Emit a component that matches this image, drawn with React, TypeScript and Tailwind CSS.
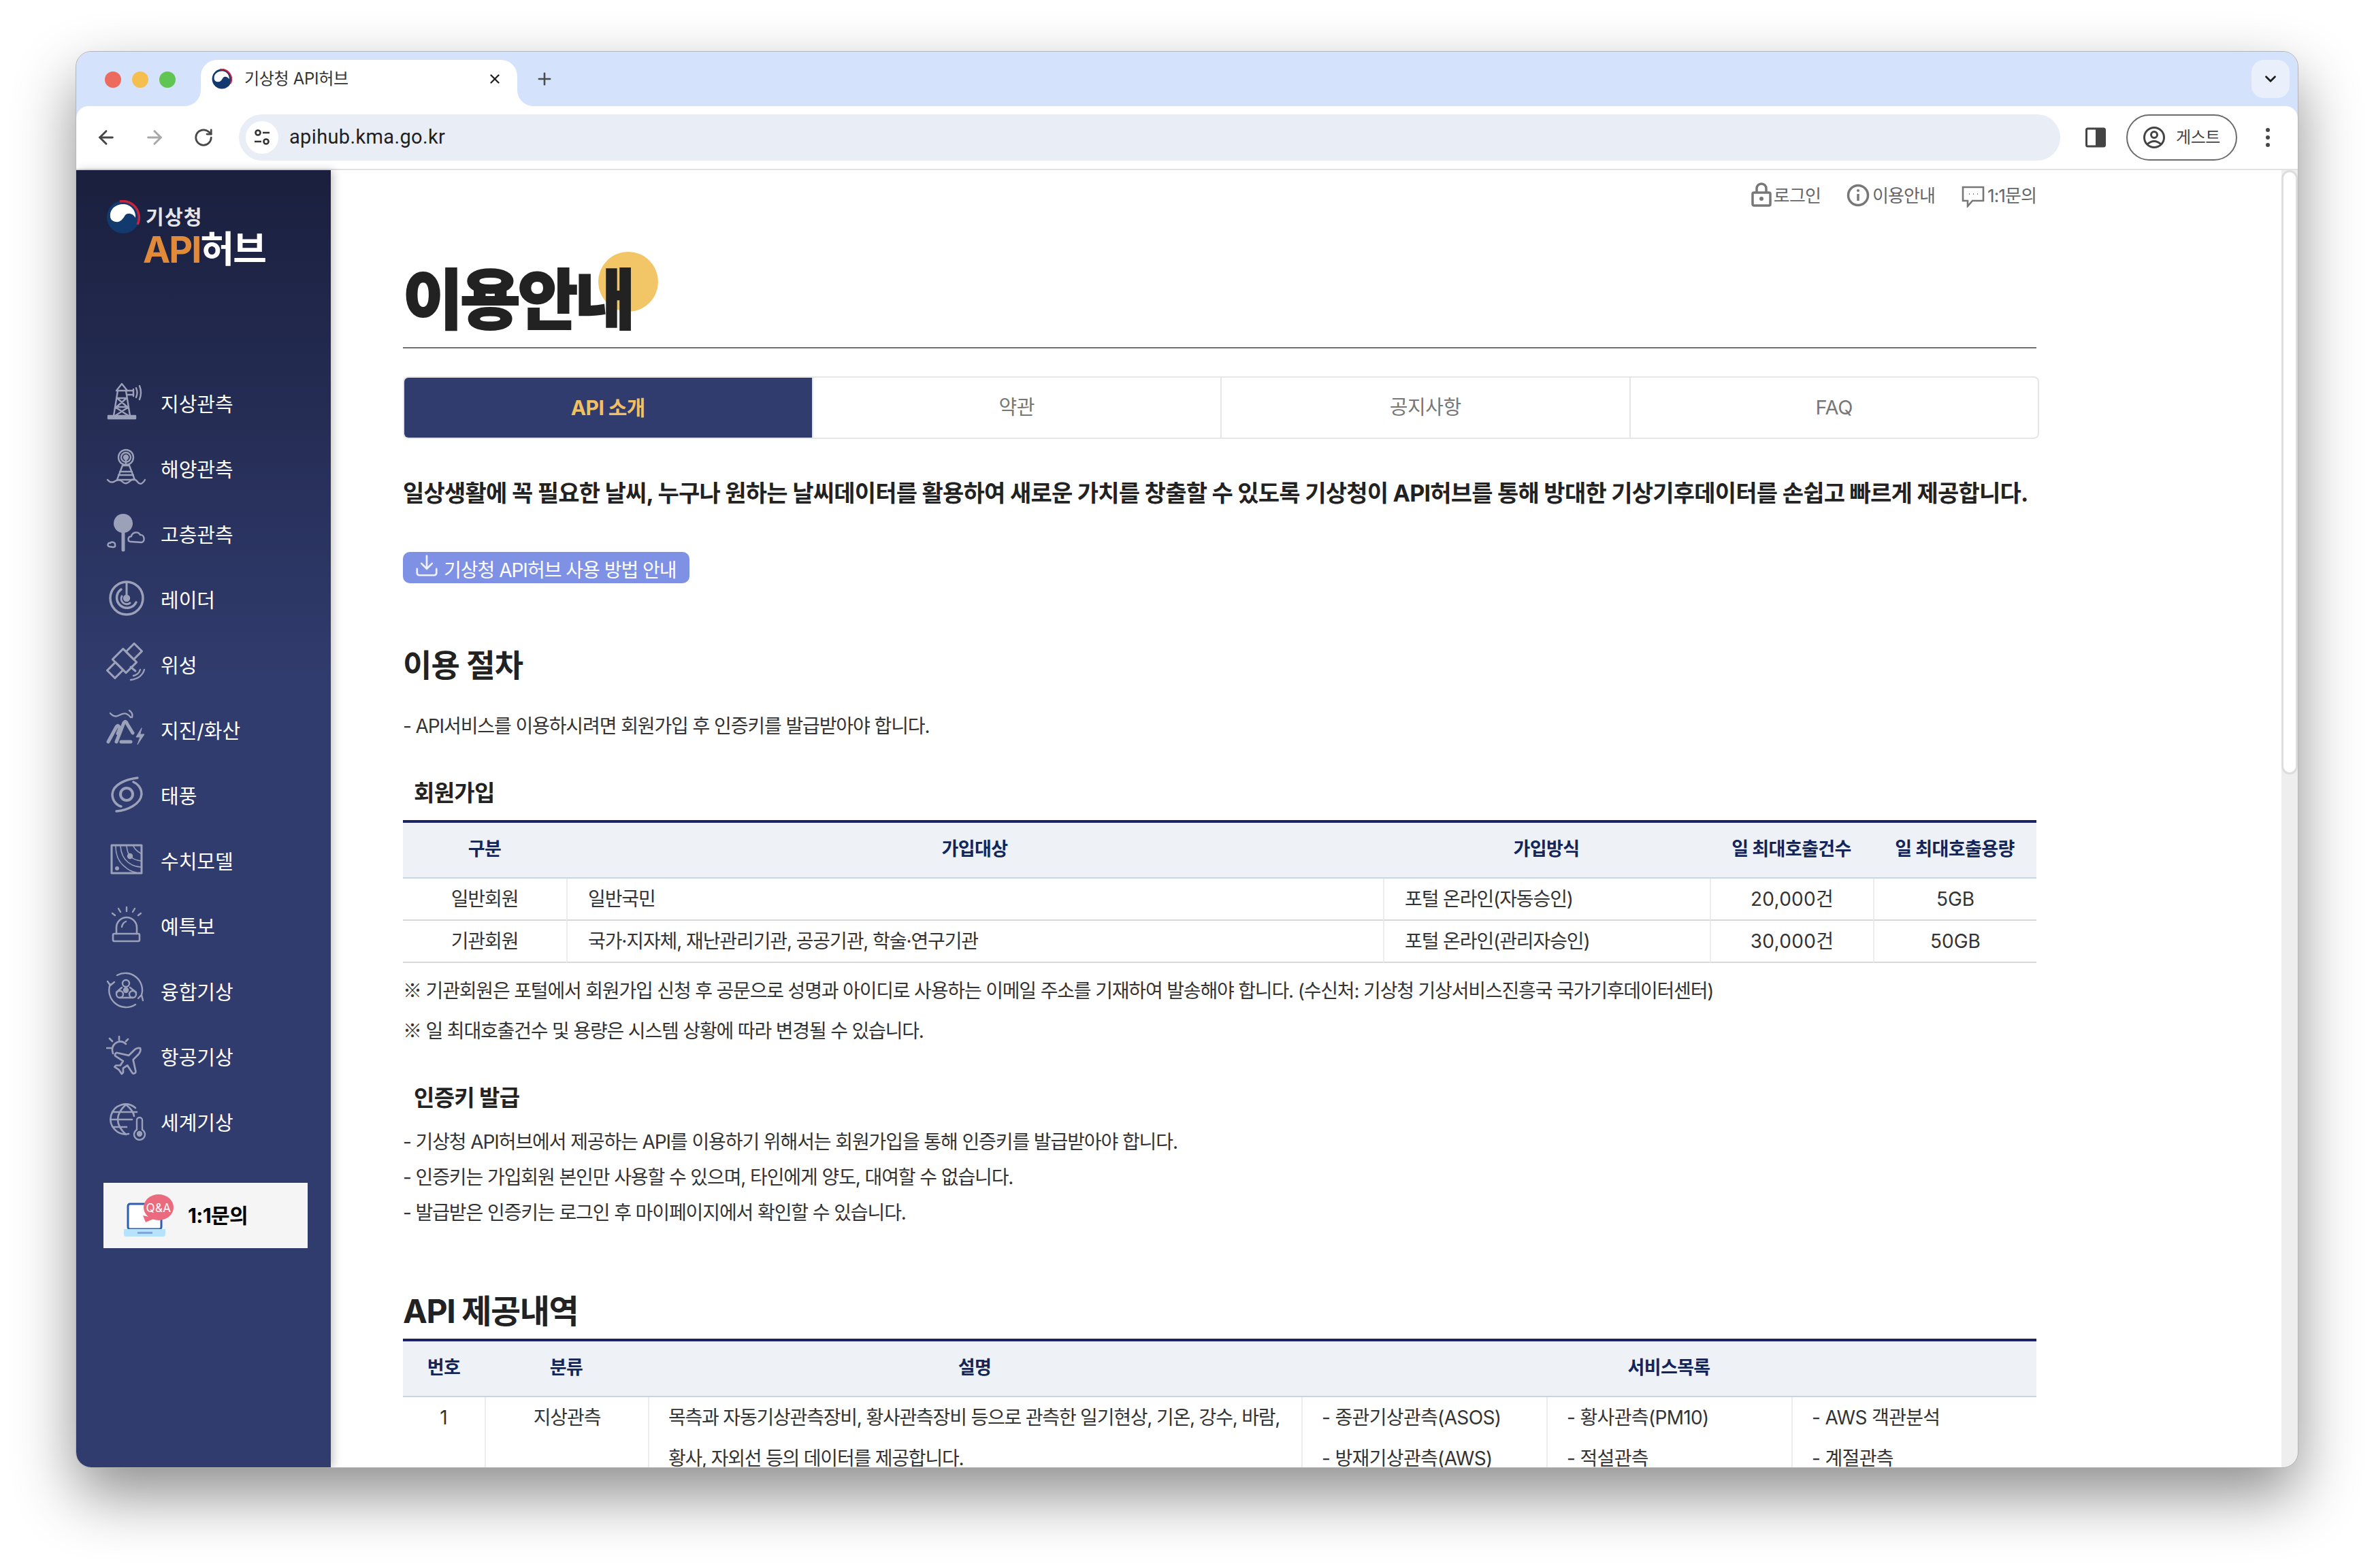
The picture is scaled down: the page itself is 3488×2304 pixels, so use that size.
import React from 'react';
import { ArrowLeft, ArrowRight, RotateCw, Plus, X, ChevronDown, Download } from 'lucide-react';

const Emblem = ({ size }: { size: number }) => (
  <svg width={size} height={size} viewBox="0 0 50 50" className="shrink-0">
    <circle cx="25" cy="25" r="24" fill="#123a6e" />
    <path d="M20 2 A24 24 0 0 1 46 36" fill="none" stroke="#c9233d" strokeWidth="3.5" />
    <path d="M6 24 C5 12 16 5 27 6 C37 7 44 16 43 26 C39 19 32 18 28 22 C24 29 20 33 14 32 C9 31 6 28 6 24Z" fill="#fff" />
  </svg>
);

const Ic = ({ children }: { children: React.ReactNode }) => (
  <svg width="60" height="60" viewBox="0 0 60 60" fill="none" stroke="currentColor" strokeWidth="2.4" strokeLinecap="round" strokeLinejoin="round" className="shrink-0 mb-[10px] text-[#9ca1ba]">
    {children}
  </svg>
);

const navItems: { label: string; icon: React.ReactNode }[] = [
  {
    label: '지상관측',
    icon: (
      <Ic>
        <rect x="3" y="51" width="40" height="4" fill="currentColor" />
        <path d="M11 51 L17 14 M35 51 L29 14 M15 14 H31 L23 4 Z M15 25 H31 M13 38 H33 M16 25 L31 38 M30 25 L15 38 M13 38 L33 51 M33 38 L13 51" />
        <path d="M31 14 H40 M31 20 H40 M40 12 V22" />
        <path d="M44 10 Q47 17 44 24 M49 7 Q53 17 49 27" />
      </Ic>
    ),
  },
  {
    label: '해양관측',
    icon: (
      <Ic>
        <circle cx="29" cy="16" r="11" />
        <circle cx="29" cy="16" r="7" />
        <circle cx="29" cy="16" r="3" fill="currentColor" />
        <path d="M29 18 V28 M24 28 H34 L42 49 H16 Z M20 37 H38 M18 42 H40" />
        <path d="M2 49 Q7 55 13 51 T24 52 T35 51 T46 52 T57 49" />
      </Ic>
    ),
  },
  {
    label: '고층관측',
    icon: (
      <Ic>
        <circle cx="25" cy="17" r="14" fill="currentColor" stroke="none" />
        <path d="M25 31 V56" strokeWidth="5" />
        <path d="M37 44 C31 44 31 37 37 36 C38 30 47 28 50 34 C56 33 58 44 52 45 Z" />
        <path d="M4 51 C1 49 3 45 6 46 C8 43 14 45 13 49 C14 51 12 52 10 52 Z" />
      </Ic>
    ),
  },
  {
    label: '레이더',
    icon: (
      <Ic>
        <circle cx="30" cy="31" r="24" strokeWidth="3.5" />
        <path d="M30 8 V31" strokeWidth="3" />
        <circle cx="30" cy="31" r="4" fill="currentColor" />
        <path d="M22 18 A15 15 0 1 0 44 37" strokeWidth="3.5" />
        <path d="M23 28 A8 8 0 0 0 35 38" strokeWidth="3" />
      </Ic>
    ),
  },
  {
    label: '위성',
    icon: (
      <Ic>
        <g transform="rotate(45 27 27)" strokeWidth="3">
          <rect x="19" y="-1" width="16" height="17" />
          <rect x="19" y="38" width="16" height="17" />
          <rect x="13" y="16" width="28" height="22" />
        </g>
        <path d="M36 36 L43 42" strokeWidth="3" />
        <path d="M40 49 Q48 47 50 40 M36 55 Q52 53 56 40" />
      </Ic>
    ),
  },
  {
    label: '지진/화산',
    icon: (
      <Ic>
        <path d="M6 8 Q12 15 19 11 T30 9 T36 14 M34 4 Q40 8 38 14" />
        <path d="M3 50 L15 28 Q18 24 20 30 L17 38 M15 50 L26 22 Q29 18 31 24 L39 37" strokeWidth="5" />
        <path d="M22 50 H36" strokeWidth="5" />
        <path d="M52 30 L44 43 H50 L46 54 L56 39 H50 Z" fill="currentColor" strokeWidth="1" />
      </Ic>
    ),
  },
  {
    label: '태풍',
    icon: (
      <Ic>
        <path d="M46 7 C30 9 10 16 9 31 C9 42 17 48 22 49 M15 56 C30 55 51 46 52 31 C52 21 45 15 40 13" strokeWidth="3.5" />
        <circle cx="30" cy="31" r="9" strokeWidth="4" />
      </Ic>
    ),
  },
  {
    label: '수치모델',
    icon: (
      <Ic>
        <rect x="8" y="10" width="44" height="41" strokeWidth="3" />
        <circle cx="35" cy="26" r="3" fill="currentColor" />
        <path d="M30 11 Q31 22 36 27 Q42 32 51 33 M21 11 Q22 27 32 35 Q41 42 51 42 M14 11 Q14 32 28 42 Q34 48 44 50" strokeWidth="1.6" />
        <path d="M40 11 Q42 17 51 22" strokeWidth="1.6" />
        <circle cx="16" cy="44" r="1.8" fill="currentColor" />
      </Ic>
    ),
  },
  {
    label: '예특보',
    icon: (
      <Ic>
        <path d="M15 44 V35 A15 15 0 0 1 45 35 V44" strokeWidth="2.6" />
        <path d="M23 34 Q24 28 29 26" />
        <rect x="10" y="44" width="39" height="11" rx="2" strokeWidth="2.6" />
        <path d="M30 5 V11 M18 7 L21 12 M42 7 L39 12 M9 14 L13 17 M51 14 L47 17" />
      </Ic>
    ),
  },
  {
    label: '융합기상',
    icon: (
      <Ic>
        <path d="M16 9 A25 25 0 0 1 52 38 M43 52 A25 25 0 0 1 6 22" strokeWidth="2.4" />
        <path d="M2 18 L6 24 L12 19 M47 43 L52 38 L54 46" strokeWidth="2.4" />
        <circle cx="29" cy="21" r="5" />
        <circle cx="20" cy="37" r="5" />
        <circle cx="39" cy="37" r="5" />
        <circle cx="29" cy="31" r="3" fill="currentColor" />
        <path d="M23 27 L15 34 M35 27 L44 34 M20 42 H39" />
      </Ic>
    ),
  },
  {
    label: '항공기상',
    icon: (
      <Ic>
        <path d="M19 8 V3 M7 20 H1 M9 10 L5 6 M29 10 L32 7 M10 28 Q6 16 17 11 Q24 9 29 14" strokeWidth="2.6" />
        <path transform="translate(6 14) scale(2.1)" strokeWidth="1.3" d="M17.8 19.2 16 11l3.5-3.5C21 6 21.5 4 21 3c-1-.5-3 0-4.5 1.5L13 8 4.8 6.2c-.5-.1-.9.1-1.1.5l-.3.5c-.2.5-.1 1 .3 1.3L9 12l-2 3H4l-1 1 3 2 2 3 1-1v-3l3-2 3.5 5.3c.3.4.8.5 1.3.3l.5-.2c.4-.3.6-.7.5-1.2z" />
      </Ic>
    ),
  },
  {
    label: '세계기상',
    icon: (
      <Ic>
        <path d="M43 12 A22 22 0 1 0 33 50 M7 29 H38 M10 18 H45 M10 40 H30 M29 7 Q17 18 17 29 T29 51 M29 7 Q40 16 41 24" strokeWidth="2.6" />
        <path d="M45 30 A4 4 0 0 1 53 30 V44 A8 8 0 1 1 45 44 Z" strokeWidth="2.4" />
        <circle cx="49" cy="50" r="3" fill="currentColor" />
      </Ic>
    ),
  },
];

const NavItem = ({ label, icon }: { label: string; icon: React.ReactNode }) => (
  <div className="h-[96px] flex items-center gap-[20px] text-white text-[29px]">
    {icon}
    <span>{label}</span>
  </div>
);

const Sidebar = () => (
  <aside className="w-[374px] shrink-0 bg-[linear-gradient(180deg,#1a1f3d_0,#313c6e_750px)] shadow-[4px_0_12px_rgba(0,0,0,0.22)] z-10 pl-[40px]">
    {/* logo */}
    <div className="pt-[44px] pl-[4px] h-[297px]">
      <div className="flex items-center gap-[8px] h-[50px]">
        <Emblem size={50} />
        <span className="text-[#e4e5ea] text-[29px] font-bold tracking-[1.2px] mt-[2px]">기상청</span>
      </div>
      <div className="ml-[54px] text-[54px] leading-[46px] font-bold tracking-[-2px]">
        <span className="text-[#e08a3a]">API</span>
        <span className="text-white">허브</span>
      </div>
    </div>
    <nav className="pl-[4px]">
      {navItems.map(item => (
        <NavItem key={item.label} label={item.label} icon={item.icon} />
      ))}
    </nav>
    {/* 1:1 button */}
    <div className="mt-[39px] w-[300px] h-[96px] bg-[#f5f5f5] flex items-center pl-[30px] gap-[21px]">
      <svg width="73" height="65" viewBox="0 0 73 65" className="shrink-0">
        <rect x="6" y="15" width="49" height="37" rx="3" fill="#fff" stroke="#2f5db0" strokeWidth="3" />
        <path d="M0 52 H61 V60 Q61 63 57 63 H4 Q0 63 0 60 Z" fill="#b7e2fb" />
        <rect x="20" y="56" width="22" height="3" fill="#7fa9de" />
        <path d="M28 32 L32 42 L46 36 Z" fill="#ec6a7e" />
        <ellipse cx="51" cy="20" rx="22" ry="19" fill="#ec6a7e" />
        <text x="51" y="27" textAnchor="middle" fontSize="17" fill="#fff" letterSpacing="0.5">Q&amp;A</text>
      </svg>
      <span className="text-[30px] font-bold text-black tracking-[-0.6px]">1:1문의</span>
    </div>
  </aside>
);

const BrowserChrome = () => (
  <>
    {/* tab strip */}
    <div className="h-[80px] bg-[#d5e2fb] flex pt-[12px] shrink-0">
      <div className="flex items-center gap-[16px] pl-[42px] w-[183px] h-[58px] shrink-0 mb-auto">
        <span className="w-[24px] h-[24px] rounded-full bg-[#ed6a5e]" />
        <span className="w-[24px] h-[24px] rounded-full bg-[#f5bf4f]" />
        <span className="w-[24px] h-[24px] rounded-full bg-[#61c554]" />
      </div>
      <div className="relative w-[465px] h-[68px] bg-white rounded-t-[24px] flex items-center pl-[16px] pr-[22px] pb-[12px] shrink-0">
        <span className="absolute left-[-24px] bottom-0 w-[24px] h-[24px] bg-[radial-gradient(circle_at_0_0,#d5e2fb_23.5px,#ffffff_24.5px)]" />
        <span className="absolute right-[-24px] bottom-0 w-[24px] h-[24px] bg-[radial-gradient(circle_at_100%_0,#d5e2fb_23.5px,#ffffff_24.5px)]" />
        <Emblem size={30} />
        <span className="ml-[18px] text-[24px] text-[#333] tracking-[-0.3px]">기상청 API허브</span>
        <X size={22} strokeWidth={2.6} className="ml-auto text-[#222]" />
      </div>
      <Plus size={28} strokeWidth={2.2} className="ml-[26px] mt-[14px] text-[#4a4a4a]" />
      <div className="ml-auto mr-[12px] w-[56px] h-[56px] rounded-[18px] bg-[#e9f0fc] flex items-center justify-center">
        <ChevronDown size={26} strokeWidth={2.6} className="text-[#1f1f1f]" />
      </div>
    </div>
    {/* toolbar */}
    <div className="h-[94px] shrink-0 bg-[#d5e2fb]">
      <div className="h-full bg-white rounded-t-[18px] border-b-2 border-[#e2e2e2] flex items-center pl-[28px]">
        <ArrowLeft size={32} strokeWidth={2.2} className="text-[#474747]" />
        <ArrowRight size={32} strokeWidth={2.2} className="ml-[39px] text-[#a8a8a8]" />
        <RotateCw size={30} strokeWidth={2.2} className="ml-[41px] text-[#474747]" />
        <div className="ml-[37px] flex-1 h-[68px] rounded-full bg-[#e9edf6] flex items-center pl-[10px]">
          <div className="w-[48px] h-[48px] rounded-full bg-white flex items-center justify-center">
            <svg width="26" height="26" viewBox="0 0 26 26" fill="none" stroke="#333" strokeWidth="2.6">
              <circle cx="7" cy="6" r="3.5" />
              <path d="M14 6 H24 M2 19 H12" />
              <circle cx="19" cy="19" r="3.5" />
            </svg>
          </div>
          <span className="ml-[16px] text-[29px] text-[#1f1f1f] font-['Roboto',sans-serif] tracking-[0.35px]">apihub.kma.go.kr</span>
        </div>
        <svg width="30" height="30" viewBox="0 0 30 30" className="ml-[37px] shrink-0">
          <rect x="1.5" y="2" width="27" height="26" rx="2" fill="#fff" stroke="#444" strokeWidth="3" />
          <rect x="15" y="2" width="13" height="26" fill="#444" />
        </svg>
        <div className="ml-[30px] w-[163px] h-[68px] rounded-full border-2 border-[#6b6b6b] flex items-center pl-[22px] gap-[15px] shrink-0">
          <svg width="34" height="34" viewBox="0 0 34 34" fill="none" stroke="#444" strokeWidth="3">
            <circle cx="17" cy="17" r="14.5" />
            <circle cx="17" cy="13" r="4.5" />
            <path d="M7 27 Q17 18 27 27" />
          </svg>
          <span className="text-[24px] text-[#444] tracking-[-0.4px]">게스트</span>
        </div>
        <div className="ml-[42px] mr-[41px] flex flex-col gap-[5px] shrink-0">
          <span className="w-[6px] h-[6px] rounded-full bg-[#474747]" />
          <span className="w-[6px] h-[6px] rounded-full bg-[#474747]" />
          <span className="w-[6px] h-[6px] rounded-full bg-[#474747]" />
        </div>
      </div>
    </div>
  </>
);

const TopLinks = () => (
  <div className="h-[74px] flex items-center justify-end text-[26px] text-[#666] tracking-[-0.9px]">
    <svg width="30" height="36" viewBox="0 0 30 36" fill="none" stroke="#777" strokeWidth="3.5" className="mb-[3px]">
      <path d="M8 15 V9 A7 7 0 0 1 22 9 V15" />
      <rect x="2" y="15" width="26" height="19" rx="2" />
      <circle cx="15" cy="24" r="3" fill="#777" stroke="none" />
    </svg>
    <span className="ml-[3px]">로그인</span>
    <svg width="34" height="34" viewBox="0 0 34 34" fill="none" stroke="#777" strokeWidth="3.5" className="ml-[38px]">
      <circle cx="17" cy="17" r="14.5" />
      <path d="M17 15 V25" />
      <circle cx="17" cy="10" r="2" fill="#777" stroke="none" />
    </svg>
    <span className="ml-[4px]">이용안내</span>
    <svg width="34" height="32" viewBox="0 0 34 32" fill="none" stroke="#777" strokeWidth="2.6" className="ml-[39px] mt-[4px]">
      <path d="M2 2 H32 V22 H16 L9 30 V22 H2 Z" />
      <path d="M11 12 h1 M17 12 h1 M23 12 h1" strokeWidth="2" />
    </svg>
    <span className="ml-[4px]">1:1문의</span>
  </div>
);

const tabs = ['API 소개', '약관', '공지사항', 'FAQ'];

const thClass = 'h-[82px] border-b-2 border-[#c9d5e3] bg-[#eef2f6] text-[#14255a] text-[27px] font-bold text-center tracking-[-0.6px] pb-[1px]';
const tdClass = 'h-[62px] border-b-2 border-[#d8d8d8] text-[#333] text-[28px] tracking-[-1.1px]';
const vline = 'border-l-2 border-l-[#ececec]';
const mark = "font-['Noto_Sans_CJK_KR',sans-serif]";

const Intro = () => (
  <div className="text-[#222]">
    <p className="mt-[50px] leading-[60px] text-[34px] font-bold tracking-[-0.76px] whitespace-nowrap">
      일상생활에 꼭 필요한 날씨, 누구나 원하는 날씨데이터를 활용하여 새로운 가치를 창출할 수 있도록 기상청이 API허브를 통해 방대한 기상기후데이터를 손쉽고 빠르게 제공합니다.
    </p>
    <button className="mt-[56px] h-[46px] w-[421px] rounded-[10px] bg-[#7f91e5] text-white text-[28px] tracking-[-1px] flex items-center pl-[16px] gap-[6px]">
      <Download size={38} strokeWidth={1.7} className="mb-[6px] text-[#eef0ff]" />
      <span className="mt-[8px]">기상청 API허브 사용 방법 안내</span>
    </button>
    <h2 className="mt-[90px] leading-[60px] text-[46px] font-bold tracking-[-0.8px]">이용 절차</h2>
    <p className="mt-[35px] leading-[50px] text-[28px] tracking-[-1.1px] text-[#333]">- API서비스를 이용하시려면 회원가입 후 인증키를 발급받아야 합니다.</p>
    <h3 className="mt-[48px] pl-[16px] leading-[50px] text-[33px] font-bold tracking-[-0.7px]">회원가입</h3>
    <table className="mt-[15px] w-full table-fixed border-separate border-spacing-0 border-t-4 border-[#1c2266]">
      <colgroup>
        <col className="w-[240px]" />
        <col className="w-[1200px]" />
        <col className="w-[480px]" />
        <col className="w-[240px]" />
        <col className="w-[240px]" />
      </colgroup>
      <thead>
        <tr>
          <th className={thClass}>구분</th>
          <th className={thClass}>가입대상</th>
          <th className={thClass}>가입방식</th>
          <th className={thClass}>일 최대호출건수</th>
          <th className={thClass}>일 최대호출용량</th>
        </tr>
      </thead>
      <tbody>
        <tr>
          <td className={`${tdClass} text-center`}>일반회원</td>
          <td className={`${tdClass} ${vline} pl-[30px]`}>일반국민</td>
          <td className={`${tdClass} ${vline} pl-[30px]`}>포털 온라인(자동승인)</td>
          <td className={`${tdClass} ${vline} text-center`}><span className="tracking-[0.3px]">20,000건</span></td>
          <td className={`${tdClass} ${vline} text-center`}><span className="tracking-[0px]">5GB</span></td>
        </tr>
        <tr>
          <td className={`${tdClass} text-center`}>기관회원</td>
          <td className={`${tdClass} ${vline} pl-[30px]`}>국가·지자체, 재난관리기관, 공공기관, 학술·연구기관</td>
          <td className={`${tdClass} ${vline} pl-[30px]`}>포털 온라인(관리자승인)</td>
          <td className={`${tdClass} ${vline} text-center`}><span className="tracking-[0.3px]">30,000건</span></td>
          <td className={`${tdClass} ${vline} text-center`}><span className="tracking-[0px]">50GB</span></td>
        </tr>
      </tbody>
    </table>
    <div className="mt-[10px] text-[28px] leading-[59px] tracking-[-1.17px] text-[#333]">
      <p className="h-[59px]"><span className={mark}>※</span> 기관회원은 포털에서 회원가입 신청 후 공문으로 성명과 아이디로 사용하는 이메일 주소를 기재하여 발송해야 합니다. (수신처: 기상청 기상서비스진흥국 국가기후데이터센터)</p>
      <p className="h-[59px]"><span className={mark}>※</span> 일 최대호출건수 및 용량은 시스템 상황에 따라 변경될 수 있습니다.</p>
    </div>
    <h3 className="mt-[45px] pl-[16px] leading-[50px] text-[33px] font-bold tracking-[-0.7px]">인증키 발급</h3>
    <div className="mt-[14px] text-[28px] leading-[52px] tracking-[-1.1px] text-[#333]">
      <p>- 기상청 API허브에서 제공하는 API를 이용하기 위해서는 회원가입을 통해 인증키를 발급받아야 합니다.</p>
      <p>- 인증키는 가입회원 본인만 사용할 수 있으며, 타인에게 양도, 대여할 수 없습니다.</p>
      <p>- 발급받은 인증키는 로그인 후 마이페이지에서 확인할 수 있습니다.</p>
    </div>
    <h2 className="mt-[89px] leading-[60px] text-[48px] font-bold tracking-[-1.4px]">API 제공내역</h2>
    <table className="mt-[10px] w-full table-fixed border-separate border-spacing-0 border-t-4 border-[#1c2266]">
      <colgroup>
        <col className="w-[120px]" />
        <col className="w-[240px]" />
        <col className="w-[960px]" />
        <col className="w-[360px]" />
        <col className="w-[360px]" />
        <col className="w-[360px]" />
      </colgroup>
      <thead>
        <tr>
          <th className={thClass}>번호</th>
          <th className={thClass}>분류</th>
          <th className={thClass}>설명</th>
          <th className={thClass} colSpan={3}>서비스목록</th>
        </tr>
      </thead>
      <tbody className="text-[28px] leading-[60px] text-[#333]">
        <tr className="align-top">
          <td className="text-center">1</td>
          <td className={`${vline} text-center tracking-[-1.1px]`}>지상관측</td>
          <td className={`${vline} pl-[28px] tracking-[-1.2px]`}>
            목측과 자동기상관측장비, 황사관측장비 등으로 관측한 일기현상, 기온, 강수, 바람,
            <br />
            황사, 자외선 등의 데이터를 제공합니다.
          </td>
          <td className={`${vline} pl-[28px] tracking-[-0.65px]`}>
            - 종관기상관측(ASOS)
            <br />
            - 방재기상관측(AWS)
          </td>
          <td className={`${vline} pl-[28px] tracking-[-0.65px]`}>
            - 황사관측(PM10)
            <br />
            - 적설관측
          </td>
          <td className={`${vline} pl-[28px] tracking-[-0.65px]`}>
            - AWS 객관분석
            <br />
            - 계절관측
          </td>
        </tr>
      </tbody>
    </table>
  </div>
);

const Main = () => (
  <main className="flex-1 flex overflow-hidden bg-white">
    <div className="w-[2400px] ml-[106px] shrink-0">
      <TopLinks />
      <div className="relative h-[188px] border-b-2 border-[#707070] flex items-end pb-[10px]">
        <span className="absolute left-[287px] top-[46px] w-[88px] h-[88px] rounded-full bg-[#f2c566]" />
        <h1 className="relative text-[96px] leading-[120px] font-black text-[#222] tracking-[-4px] [-webkit-text-stroke:2px_#222]">이용안내</h1>
      </div>
      <div className="mt-[41px] w-[2404px] h-[92px] border-2 border-[#e6e6e6] rounded-[8px] flex overflow-hidden text-[29px] text-[#777]">
        {tabs.map((t, i) => (
          <div
            key={t}
            className={
              i === 0
                ? 'flex-1 flex items-center justify-center bg-[#303c6e] text-[#f2c063] text-[30px] font-bold tracking-[-0.6px]'
                : 'flex-1 flex items-center justify-center border-l-2 border-[#e6e6e6] tracking-[-0.4px]'
            }
          >
            {t}
          </div>
        ))}
      </div>
      <Intro />
    </div>
    {/* scrollbar */}
    <div className="ml-auto w-[24px] bg-[#eeeeee] shrink-0">
      <div className="h-[888px] bg-white border-[3px] border-[#dddddd] rounded-[12px]" />
    </div>
  </main>
);

export default function App() {
  return (
    <div className="w-[3488px] h-[2304px] bg-white pt-[76px] pl-[112px] overflow-hidden font-['Inter','Noto_Sans_CJK_KR',sans-serif]">
      <div className="w-[3264px] h-[2080px] rounded-[22px] overflow-hidden flex flex-col bg-white shadow-[0_40px_90px_rgba(0,0,0,0.45)] outline outline-1 outline-[#b5b5b5]">
        <BrowserChrome />
        <div className="flex-1 flex min-h-0">
          <Sidebar />
          <Main />
        </div>
      </div>
    </div>
  );
}
